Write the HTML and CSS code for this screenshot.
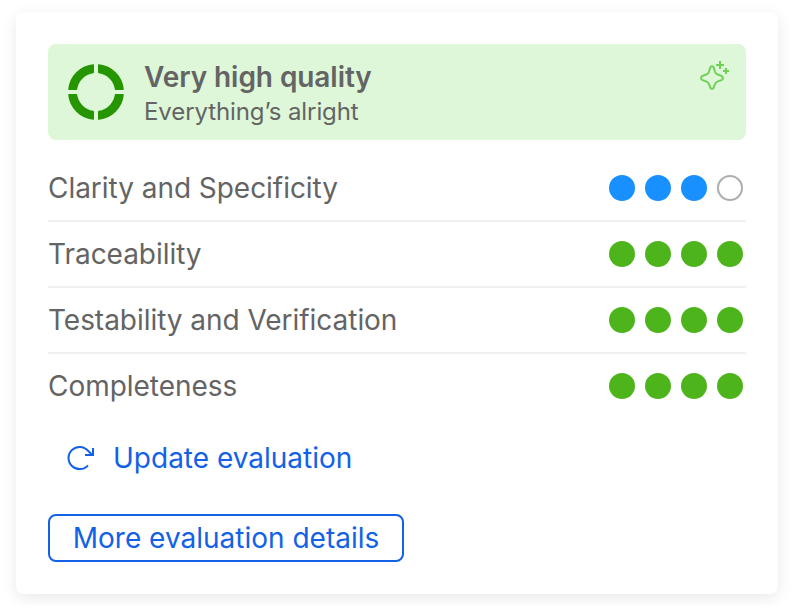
FILE: index.html
```html
<!DOCTYPE html>
<html lang="en">
<head>
<meta charset="utf-8">
<title>Quality evaluation</title>
<link rel="stylesheet" href="styles.css">
</head>
<body>
<main class="card">
  <header class="banner">
    <svg class="ring" viewBox="0 0 56 56" width="56" height="56">
      <g id="q">
        <path d="M1.2 25 A27 27 0 0 1 25 1.2 V8.2 A20 20 0 0 0 8.2 25 Z"/>
      </g>
      <use href="#q" transform="rotate(90 28 28)"/>
      <use href="#q" transform="rotate(180 28 28)"/>
      <use href="#q" transform="rotate(270 28 28)"/>
    </svg>
    <div class="summary">
      <h1 class="title">Very high quality</h1>
      <p class="subtitle">Everything’s alright</p>
    </div>
    <svg class="sparkle" viewBox="0 0 32 32" width="32" height="32">
      <path d="M12.5 6.9Q14 5.4 15.5 6.9L17 11.8Q17.6 13.6 19.3 14.3L24 16.1Q25.9 18 24 19.9L19.3 21.6Q17.6 22.2 17 24L15.5 28.1Q14 29.6 12.5 28.1L11 24Q10.4 22.2 8.7 21.6L4 19.9Q2.1 18 4 16.1L8.7 14.3Q10.4 13.6 11 11.8Z"/>
      <path d="M22 1V9M18 5H26M28 8V14M25 11H31"/>
    </svg>
  </header>
  <ul class="criteria">
    <li class="row"><span>Clarity and Specificity</span><span class="dots blue"><i></i><i></i><i></i><i class="empty"></i></span></li>
    <li class="row"><span>Traceability</span><span class="dots"><i></i><i></i><i></i><i></i></span></li>
    <li class="row"><span>Testability and Verification</span><span class="dots"><i></i><i></i><i></i><i></i></span></li>
    <li class="row"><span>Completeness</span><span class="dots"><i></i><i></i><i></i><i></i></span></li>
  </ul>
  <button class="update">
    <svg viewBox="0 0 28 28" width="28" height="28">
      <path d="M22 21.3A11.1 11.1 0 1 1 22 6.7L26 10.6"/>
      <path d="M27 4V11H19"/>
    </svg>
    <span>Update evaluation</span>
  </button>
  <button class="details">More evaluation details</button>
</main>
</body>
</html>
```
FILE: styles.css
```css
* { box-sizing: border-box; margin: 0; padding: 0; }
body {
  background: #fff;
  padding: 12px 16px;
  font-family: Inter, sans-serif;
  color: #646464;
}
.card {
  display: flex;
  flex-direction: column;
  align-items: flex-start;
  width: 762px;
  height: 582px;
  padding: 32px;
  border-radius: 8px;
  background: #fff;
  box-shadow: 0 4px 16px rgba(0, 0, 0, .09);
}
.banner {
  display: flex;
  align-items: center;
  width: 100%;
  height: 96px;
  padding: 0 16px 0 20px;
  border-radius: 8px;
  background: #def7d9;
}
.ring { fill: #259500; stroke: #259500; stroke-width: 2; stroke-linejoin: round; }
.summary { flex: 1; margin-left: 20px; padding-top: 3px; }
.title { font-size: 28px; line-height: 36px; font-weight: 600; letter-spacing: -0.07px; }
.subtitle { font-size: 24px; line-height: 34px; letter-spacing: -0.1px; }
.sparkle {
  align-self: flex-start;
  margin-top: 16px;
  fill: none;
  stroke: #70d055;
  stroke-width: 2;
  stroke-linejoin: round;
}
.criteria { width: 100%; margin-top: 16px; list-style: none; }
.row {
  display: flex;
  align-items: center;
  justify-content: space-between;
  height: 66px;
  border-bottom: 2px solid #f0f0f0;
  font-size: 28px;
  letter-spacing: -0.04px;
}
.row:last-child { height: 64px; border-bottom: 0; }
.dots { display: flex; gap: 10px; margin-right: 3px; }
.dots i { width: 26px; height: 26px; border-radius: 50%; background: #4db51b; }
.dots.blue i { background: #1890ff; }
.dots.blue .empty { background: #fff; border: 2px solid #adadad; }
button { border: 0; background: none; font: 28px/36px Inter, sans-serif; color: #1261e6; }
.update {
  display: flex;
  align-items: center;
  gap: 19px;
  height: 48px;
  margin-top: 16px;
  padding-left: 18px;
}
.update svg { fill: none; stroke: #1261e6; stroke-width: 2; }
.details {
  width: 356px;
  height: 48px;
  margin-top: 32px;
  border: 2px solid #1261e6;
  border-radius: 8px;
}
```
